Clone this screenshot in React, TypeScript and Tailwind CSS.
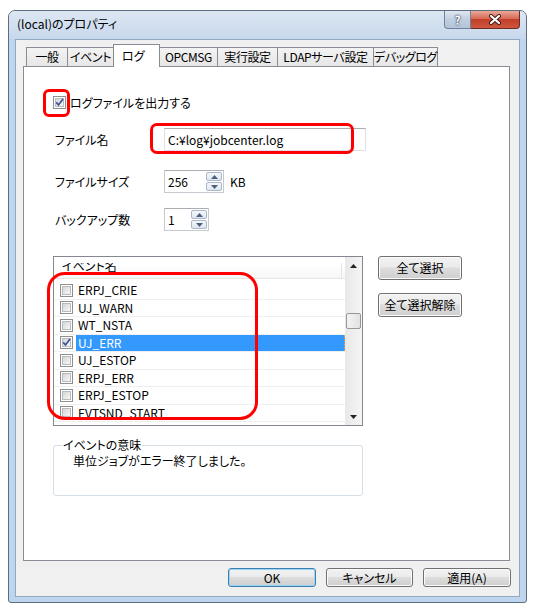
import React from "react";

const Checkbox = ({ checked = false }: { checked?: boolean }) => (
  <div className="w-[13px] h-[13px] shrink-0 border border-[#8e8f8f] bg-white p-[1px]">
    <div className="w-full h-full border border-[#b9bbbd] bg-[linear-gradient(135deg,#d6d6d6,#f7f7f7)] flex items-center justify-center">
      {checked && (
        <svg width="9" height="9" viewBox="0 0 9 9" className="shrink-0">
          <path d="M1.2 4.4 L3.5 6.9 L8 1" fill="none" stroke="#3a5597" strokeWidth="1.7" />
        </svg>
      )}
    </div>
  </div>
);

const SpinBtn = ({ up }: { up?: boolean }) => (
  <div className="flex-1 border border-[#aab7c8] rounded-[2px] bg-[linear-gradient(#f4f7fb,#dfe6ef)] flex items-center justify-center">
    <svg width="7" height="4" viewBox="0 0 7 4">
      {up ? <polygon points="3.5,0 7,4 0,4" fill="#4c607c" /> : <polygon points="0,0 7,0 3.5,4" fill="#4c607c" />}
    </svg>
  </div>
);

const Spinner = ({ value, wide }: { value: string; wide?: boolean }) => (
  <div className={"h-[23px] flex bg-white border border-[#c5c9d0] border-t-[#abadb3] " + (wide ? "w-[60px]" : "w-[45px]")}>
    <div className="flex-1 pl-[3px] flex items-center">{value}</div>
    <div className="w-[17px] flex flex-col gap-[1px] py-[1px] pr-[1px]">
      <SpinBtn up />
      <SpinBtn />
    </div>
  </div>
);

const Button = ({ children, w, def }: { children: React.ReactNode; w: string; def?: boolean }) => (
  <div
    className={
      "flex items-center justify-center whitespace-nowrap rounded-[3px] border bg-[linear-gradient(#f2f2f2_0%,#ebebeb_45%,#dddddd_50%,#cfcfcf_100%)] " +
      w +
      (def ? " border-[#3c7fb1] shadow-[inset_0_0_0_1px_#9ad3f3]" : " border-[#707070] shadow-[inset_0_0_0_1px_#fbfbfb]")
    }
  >
    {children}
  </div>
);

const rows = ["ERPJ_CRIE", "UJ_WARN", "WT_NSTA", "UJ_ERR", "UJ_ESTOP", "ERPJ_ERR", "ERPJ_ESTOP", "EVTSND_START"];

const Tab = ({ label, w, sel }: { label: string; w: string; sel?: boolean }) =>
  sel ? (
    <div className={"relative z-10 -ml-px -mb-px h-[23px] flex items-center pl-[8px] whitespace-nowrap border border-b-0 border-[#898c95] bg-white " + w}>
      {label}
    </div>
  ) : (
    <div className={"-ml-px first:ml-0 h-[19px] flex items-center justify-center whitespace-nowrap tracking-[-0.4px] border border-b-0 border-[#898c95] bg-[linear-gradient(#f3f3f3,#e6e6e6)] " + w}>
      {label}
    </div>
  );

export default function App() {
  return (
    <div className="w-[534px] h-[610px] bg-white pt-[10px] pl-[8px] font-['Noto_Sans_CJK_JP',sans-serif] text-[12px] leading-[16px] text-black [font-feature-settings:'palt']">
      <div className="w-[519px] h-[593px] flex flex-col border border-[#5d6d80] rounded-t-[7px] rounded-b-[3px] bg-[#bfd5ed] overflow-hidden">
        {/* title bar */}
        <div className="h-[28px] shrink-0 flex items-start px-[6px] bg-[linear-gradient(#dde7f3,#c7d8ec)]">
          <div className="pl-[2px] pt-[6px] leading-[14px] text-[12px]">(local)のプロパティ</div>
          <div className="ml-auto flex">
            <div className="w-[27px] h-[18px] flex items-center justify-center border border-t-0 border-[#72829a] rounded-bl-[4px] bg-[linear-gradient(#dfe7f1,#c0cfe0_50%,#b3c4d9)]">
              <span className="text-white font-bold text-[12px] leading-[12px] [text-shadow:0_0_2px_#1d2b3c,0_0_1px_#1d2b3c]">?</span>
            </div>
            <div className="w-[49px] h-[18px] flex items-center justify-center border border-t-0 border-l-0 border-[#6e2c22] rounded-br-[4px] bg-[linear-gradient(#eaa99b,#d86a55_45%,#c33f2a_50%,#cc573f)]">
              <svg width="14" height="11" viewBox="0 0 14 11">
                <path d="M3 2 L11 9 M11 2 L3 9" stroke="#3a1a14" strokeWidth="4" strokeLinecap="round" />
                <path d="M3 2 L11 9 M11 2 L3 9" stroke="#ffffff" strokeWidth="2.2" strokeLinecap="round" />
              </svg>
            </div>
          </div>
        </div>
        {/* client */}
        <div className="mx-[6px] h-[558px] shrink-0 border border-[#92a7c0] bg-[#f0f0f0] flex flex-col pt-[4px]">
          <div className="h-[22px] pl-[10px] flex items-end">
            <Tab label="一般" w="w-[42px]" />
            <Tab label="イベント" w="w-[47px]" />
            <Tab label="ログ" w="w-[47px]" sel />
            <Tab label="OPCMSG" w="w-[59px]" />
            <Tab label="実行設定" w="w-[61px]" />
            <Tab label="LDAPサーバ設定" w="w-[97px]" />
            <Tab label="デバッグログ" w="w-[65px]" />
          </div>
          {/* panel */}
          <div className="relative ml-[7px] mr-[9px] h-[495px] border border-[#898c95] bg-white flex flex-col pl-[29px]">
            <div className="mt-[29px] h-[13px] flex items-center gap-[4px]">
              <Checkbox checked />
              <span>ログファイルを出力する</span>
            </div>
            <div className="mt-[19px] h-[23px] flex items-center">
              <div className="w-[111px] pl-[2px]">ファイル名</div>
              <div className="w-[202px] h-[23px] flex items-center pl-[3px] bg-white border border-[#dbdfe6] border-t-[#abadb3]">C:¥log¥jobcenter.log</div>
            </div>
            <div className="mt-[19px] h-[23px] flex items-center">
              <div className="w-[111px] pl-[2px]">ファイルサイズ</div>
              <Spinner value="256" wide />
              <span className="ml-[6px]">KB</span>
            </div>
            <div className="mt-[15px] h-[23px] flex items-center">
              <div className="w-[111px] pl-[2px]">バックアップ数</div>
              <Spinner value="1" />
            </div>
            <div className="mt-[25px] flex items-start">
              {/* list */}
              <div className="w-[310px] h-[170px] border border-[#828790] bg-white flex overflow-hidden">
                <div className="flex-1 flex flex-col overflow-hidden">
                  <div className="h-[6px] shrink-0" />
                  <div className="h-[16px] shrink-0 overflow-hidden flex border-b border-[#e5e5e5] bg-[linear-gradient(#ffffff,#f6f7f8)]">
                    <div className="w-[288px] border-r border-[#e5e5e5] pl-[8px] -mt-[5px] leading-[16px]">イベント名</div>
                  </div>
                  <div className="h-[3px] shrink-0" />
                  {rows.map((r) => {
                    const sel = r === "UJ_ERR";
                    return (
                      <div key={r} className="h-[17.5px] shrink-0 flex items-center border-b border-[#efefef] pl-[6px]">
                        <Checkbox checked={sel} />
                        {sel ? (
                          <div className="ml-[3px] flex-1 h-[16px] flex items-center pl-[2px] bg-[#3399ff] text-white border-r border-dotted border-[#ff9a3c]">{r}</div>
                        ) : (
                          <div className="ml-[5px]">{r}</div>
                        )}
                      </div>
                    );
                  })}
                </div>
                {/* scrollbar */}
                <div className="w-[17px] shrink-0 flex flex-col bg-[linear-gradient(90deg,#e8e8e8,#f5f5f5)]">
                  <div className="h-[17px] flex items-center justify-center">
                    <svg width="7" height="4" viewBox="0 0 7 4"><polygon points="3.5,0 7,4 0,4" fill="#222" /></svg>
                  </div>
                  <div className="flex-1">
                    <div className="mt-[39px] mx-[1px] h-[16px] rounded-[2px] border border-[#979797] bg-[linear-gradient(90deg,#f3f3f3,#e2e2e2)]" />
                  </div>
                  <div className="h-[17px] flex items-center justify-center">
                    <svg width="7" height="4" viewBox="0 0 7 4"><polygon points="0,0 7,0 3.5,4" fill="#222" /></svg>
                  </div>
                </div>
              </div>
              <div className="ml-[15px] flex flex-col gap-[13px]">
                <Button w="w-[84px] h-[24px]">全て選択</Button>
                <Button w="w-[84px] h-[24px]">全て選択解除</Button>
              </div>
            </div>
            <fieldset className="mt-[11px] w-[310px] h-[59px] border border-[#d5dfe5] rounded-[3px] pl-[19px] pr-0 pb-0 pt-0 m-0">
              <legend className="ml-[-11px] px-[1px] leading-[16px]">イベントの意味</legend>
              <div className="leading-[16px]">単位ジョブがエラー終了しました。</div>
            </fieldset>

            {/* red annotations */}
            <div className="absolute left-[19px] top-[22px] w-[27px] h-[28px] border-[3px] border-[#ff0000] rounded-[6px]" />
            <div className="absolute left-[126px] top-[56px] w-[204px] h-[31px] border-[3px] border-[#ff0000] rounded-[7px]" />
            <div className="absolute left-[23px] top-[205px] w-[211px] h-[148px] border-[3px] border-[#ff0000] rounded-[18px]" />
          </div>
          {/* bottom buttons */}
          <div className="mt-[7px] flex justify-end gap-[10px] pr-[8px]">
            <Button w="w-[88px] h-[19px]" def>OK</Button>
            <Button w="w-[87px] h-[19px]">キャンセル</Button>
            <Button w="w-[88px] h-[19px]">適用(A)</Button>
          </div>
        </div>
      </div>
    </div>
  );
}
